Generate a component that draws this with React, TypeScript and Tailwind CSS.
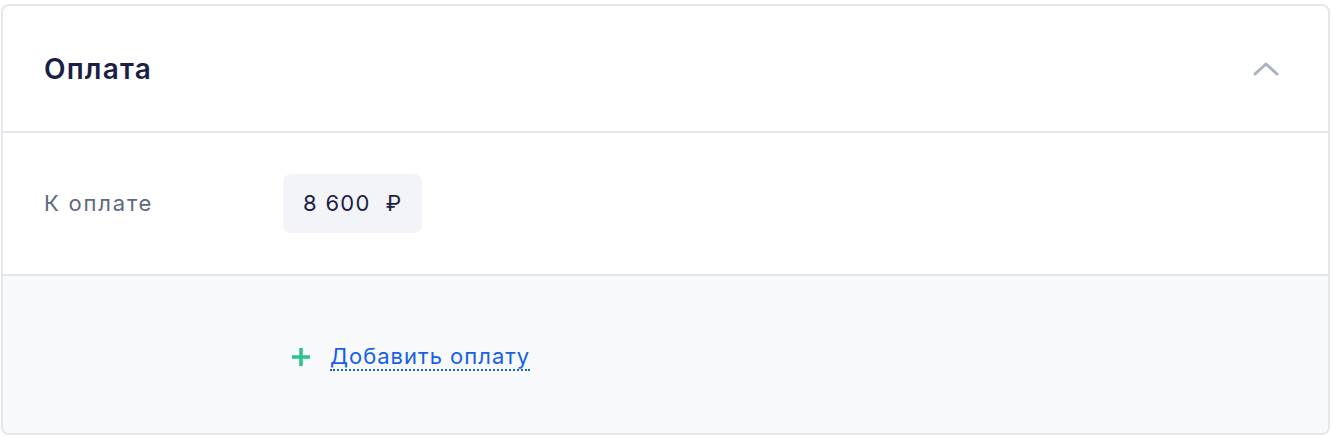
import React from "react";

export default function App() {
  return (
    <div
      className="w-[1334px] h-[438px] bg-white pt-[4px] pl-[1px] pr-[4px] pb-[3px]"
      style={{ fontFamily: "Inter, 'Noto Sans', sans-serif" }}
    >
      <div className="h-full rounded-[8px] border-2 border-[#e3e6eb] bg-white overflow-hidden flex flex-col">
        <div className="h-[127px] shrink-0 flex items-center justify-between pl-[41px] pr-[48px] border-b-2 border-[#e3e6eb]">
          <div className="text-[28px] font-semibold tracking-[1.2px] text-[#1c1f45] leading-none">Оплата</div>
          <svg width="28" height="16" viewBox="0 0 28 16" fill="none">
            <path d="M3 13 L14 3 L25 13" stroke="#a9b3c0" strokeWidth="3" strokeLinecap="round" strokeLinejoin="round" />
          </svg>
        </div>
        <div className="h-[143px] shrink-0 flex items-center pl-[41px] border-b-2 border-[#e3e6eb]">
          <div className="w-[239px] text-[22px] tracking-[1.8px] text-[#5e6a7d] leading-none -mt-[2px]">К оплате</div>
          <div className="h-[59px] px-[20px] rounded-[8px] bg-[#f3f4f7] flex items-center text-[22px] tracking-[1.3px] text-[#1c1f45]">
            8 600&nbsp;&nbsp;₽
          </div>
        </div>
        <div className="flex-1 bg-[#f8f9fb] flex items-center pl-[288px] pt-[4px]">
          <svg width="20" height="20" viewBox="0 0 20 20" className="mr-[19px]">
            <path d="M10 1 V19 M1 10 H19" stroke="#2cc38d" strokeWidth="3.5" />
          </svg>
          <span className="text-[22px] tracking-[1px] text-[#1660e6] leading-[26px] border-b-2 border-dotted border-[#1660e6]">
            Добавить оплату
          </span>
        </div>
      </div>
    </div>
  );
}
